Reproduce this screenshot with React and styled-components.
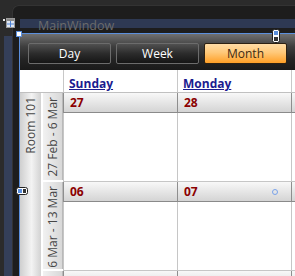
import styled, { createGlobalStyle } from "styled-components";

const GlobalStyle = createGlobalStyle`
  html, body {
    margin: 0;
    padding: 0;
    background: #2b2b2b;
    overflow: hidden;
  }
  body {
    font-family: "Open Sans", "Liberation Sans", sans-serif;
  }
`;

const Designer = styled.div`
  position: relative;
  width: 295px;
  height: 276px;
  display: flex;
  background: #2b2b2b;
  overflow: hidden;
`;

const Gutter = styled.div`
  flex: none;
  width: 8px;
  margin: 36px 0 0 4px;
  background: #343f59;
`;

const Frame = styled.div`
  flex: 1;
  min-width: 0;
  margin-top: 5px;
  padding-top: 14px;
  display: flex;
  flex-direction: column;
  background: #1d1d1d;
  border-top-left-radius: 6px;
  box-shadow: inset 1px 1px 0 #333;
`;

const TitleBand = styled.div`
  height: 9px;
  margin-left: 8px;
  padding-left: 18px;
  background: #2e3953;
  color: #6b6b6b;
  font-size: 12.5px;
  line-height: 14px;
  white-space: nowrap;
`;

const Surface = styled.div`
  flex: 1;
  min-height: 0;
  margin: 5px 0 0 7px;
  display: flex;
  flex-direction: column;
  background: #fff;
  border-top: 1px solid #5b8fdc;
  border-left: 1px solid #5b8fdc;
  overflow: hidden;
`;

const Toolbar = styled.div`
  flex: none;
  height: 36px;
  box-sizing: border-box;
  padding: 9px 0 0 8px;
  display: flex;
  gap: 5px;
  background: linear-gradient(#707070, #3e3e3e 35%, #242424 70%, #1a1a1a);
`;

const ModeButton = styled.div`
  flex: none;
  width: 83px;
  height: 21px;
  box-sizing: border-box;
  display: flex;
  align-items: center;
  justify-content: center;
  border-radius: 2px;
  font-size: 12px;
  border: 1px solid ${(p) => (p.$active ? "#2d2112" : "#6c6c6c")};
  color: ${(p) => (p.$active ? "#3d2a12" : "#fff")};
  background: ${(p) =>
    p.$active
      ? "linear-gradient(#ffdca6, #ffc878 45%, #ff9f26)"
      : "linear-gradient(#505050, #2c2c2c 50%, #151515)"};
`;

const Calendar = styled.div`
  flex: 1;
  display: flex;
  flex-direction: column;
  background: #fff;
`;

const HeaderRow = styled.div`
  flex: none;
  height: 22px;
  display: flex;
`;

const Corner = styled.div`
  flex: none;
  width: 43px;
`;

const DayName = styled.div`
  flex: none;
  width: 114px;
  box-sizing: border-box;
  padding: 5px 0 0 5px;
  border-left: 1px solid #c8c8c8;
  font-size: 12px;
  font-weight: 700;
  color: #1b1b8f;
  text-decoration: underline;
  white-space: nowrap;
`;

const Body = styled.div`
  flex: 1;
  display: flex;
  border-top: 1px solid #c0c0c0;
`;

const RoomColumn = styled.div`
  flex: none;
  width: 21px;
  margin-right: 2px;
  padding-top: 4px;
  box-sizing: border-box;
  display: flex;
  flex-direction: column;
  align-items: center;
  background: linear-gradient(to right, #cfcfcf, #f3f3f3 55%, #d2d2d2);
`;

const VerticalLabel = styled.span`
  writing-mode: vertical-rl;
  transform: rotate(180deg);
  font-size: 12px;
  line-height: 14px;
  color: #464646;
  white-space: nowrap;
`;

const Weeks = styled.div`
  flex: 1;
  display: flex;
  flex-direction: column;
`;

const WeekRow = styled.div`
  flex: none;
  height: 89px;
  display: flex;
`;

const DateSlot = styled.div`
  flex: none;
  width: 20px;
  padding-bottom: 2px;
  display: flex;
`;

const DatePanel = styled.div`
  flex: 1;
  padding-top: 4px;
  display: flex;
  flex-direction: column;
  align-items: center;
  background: linear-gradient(to right, #f1f1f1, #d8d8d8);
  border-right: 1px solid #b9b9b9;
`;

const DayCell = styled.div`
  flex: none;
  width: 114px;
  box-sizing: border-box;
  display: flex;
  flex-direction: column;
  border-left: 1px solid #c6c6c6;
  border-bottom: 1px solid #c6c6c6;
`;

const DayBar = styled.div`
  position: relative;
  height: 20px;
  margin-left: -1px;
  box-sizing: border-box;
  padding-left: 6px;
  display: flex;
  align-items: center;
  border-left: 1px solid #8e8e8e;
  border-bottom: 1px solid #8a8a8a;
  background: linear-gradient(#f8f8f8, #d4d4d4);
  font-size: 12px;
  font-weight: 700;
  color: #8b0000;
`;

const Marker = styled.span`
  position: absolute;
  right: 13px;
  top: 7px;
  width: 4px;
  height: 4px;
  border: 1px solid #7aa3ea;
  border-radius: 50%;
`;

const Overlay = styled.div`
  position: absolute;
  left: ${(p) => p.$x}px;
  top: ${(p) => p.$y}px;
  line-height: 0;
`;

// the third column is only a sliver at the right edge, so its labels stay empty
const weeks = [
  { range: "27 Feb - 6 Mar", days: ["27", "28", ""] },
  { range: "6 Mar - 13 Mar", days: ["06", "07", ""], marker: 1 },
  { range: "13 Mar - 20 Mar", days: ["", "", ""] },
];

export default function App() {
  return (
    <>
      <GlobalStyle />
      <Designer>
        <Gutter />
        <Frame>
          <TitleBand>MainWindow</TitleBand>
          <Surface>
            <Toolbar>
              <ModeButton>Day</ModeButton>
              <ModeButton>Week</ModeButton>
              <ModeButton $active>Month</ModeButton>
            </Toolbar>
            <Calendar>
              <HeaderRow>
                <Corner />
                <DayName>Sunday</DayName>
                <DayName>Monday</DayName>
                <DayName />
              </HeaderRow>
              <Body>
                <RoomColumn>
                  <VerticalLabel>Room 101</VerticalLabel>
                </RoomColumn>
                <Weeks>
                  {weeks.map((w) => (
                    <WeekRow key={w.range}>
                      <DateSlot>
                        <DatePanel>
                          {w.days[0] && <VerticalLabel>{w.range}</VerticalLabel>}
                        </DatePanel>
                      </DateSlot>
                      {w.days.map((d, i) => (
                        <DayCell key={i}>
                          <DayBar>
                            {d}
                            {w.marker === i && <Marker />}
                          </DayBar>
                        </DayCell>
                      ))}
                    </WeekRow>
                  ))}
                </Weeks>
              </Body>
            </Calendar>
          </Surface>
        </Frame>

        {/* window icon */}
        <Overlay $x={3} $y={17}>
          <svg width="13" height="13" viewBox="0 0 13 13">
            <rect x="0" y="2" width="2" height="2" fill="#e8e8e8" />
            <rect x="3.5" y="1.5" width="8" height="9" fill="#dfe6f2" stroke="#9a9a9a" />
            <rect x="4" y="2" width="7" height="2" fill="#8a8a8a" />
            <path d="M7.5 4v6M4 7h7" stroke="#4f83d6" />
          </svg>
        </Overlay>
        {/* selection corner */}
        <Overlay $x={16} $y={31}>
          <svg width="6" height="6" viewBox="0 0 6 6">
            <rect x="0.5" y="0.5" width="5" height="5" fill="#fff" stroke="#5b8fdc" />
          </svg>
        </Overlay>
        {/* top resize grip */}
        <Overlay $x={272} $y={29}>
          <svg width="8" height="14" viewBox="0 0 8 14">
            <rect x="0.5" y="0.5" width="7" height="13" rx="2" fill="#fff" stroke="#222" />
            <rect x="2" y="2" width="4" height="4" fill="#5b8fdc" />
            <rect x="2" y="8" width="4" height="4" fill="#333" />
          </svg>
        </Overlay>
        {/* left resize grip */}
        <Overlay $x={16} $y={187}>
          <svg width="12" height="8" viewBox="0 0 12 8">
            <rect x="0.5" y="0.5" width="11" height="7" rx="2" fill="#fff" stroke="#222" />
            <rect x="2" y="2" width="4" height="4" fill="#5b8fdc" />
            <rect x="7" y="2" width="3" height="4" fill="#333" />
          </svg>
        </Overlay>
      </Designer>
    </>
  );
}
